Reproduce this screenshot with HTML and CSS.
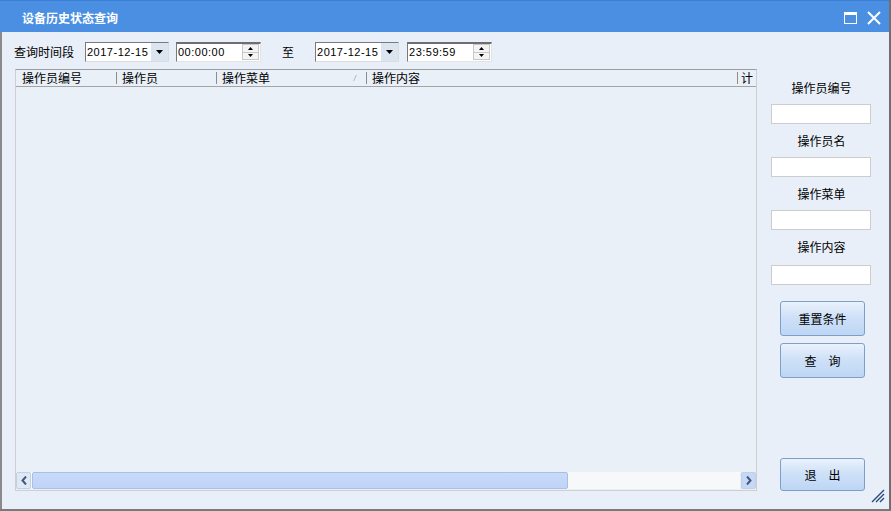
FILE: index.html
```html
<!DOCTYPE html>
<html lang="zh">
<head>
<meta charset="utf-8">
<title>设备历史状态查询</title>
<link rel="stylesheet" href="styles.css">
</head>
<body>
<div class="window">
  <div class="titlebar">
    <span class="title">设备历史状态查询</span>
    <div class="tb-btns">
      <svg class="tb-max" width="13" height="12" viewBox="0 0 13 12"><rect x="0.5" y="0.5" width="12" height="11" fill="none" stroke="#fff"/><rect x="0" y="0" width="13" height="3" fill="#fff"/></svg>
      <svg class="tb-close" width="14" height="14" viewBox="0 0 14 14"><path d="M1 1 L13 13 M13 1 L1 13" stroke="#fff" stroke-width="2"/></svg>
    </div>
  </div>
  <div class="content">
    <div class="left">
      <div class="toolbar">
        <span class="lbl">查询时间段</span>
        <div class="combo"><span class="val">2017-12-15</span><span class="drop"><svg width="7" height="4" viewBox="0 0 7 4"><path d="M0 0 H7 L3.5 4 Z" fill="#000"/></svg></span></div>
        <div class="timebox"><span class="val">00:00:00</span><span class="spin"><span class="sp"><svg width="5" height="3" viewBox="0 0 5 3"><path d="M2.5 0 L5 3 H0 Z" fill="#000"/></svg></span><span class="sp"><svg width="5" height="3" viewBox="0 0 5 3"><path d="M0 0 H5 L2.5 3 Z" fill="#000"/></svg></span></span></div>
        <span class="to">至</span>
        <div class="combo"><span class="val">2017-12-15</span><span class="drop"><svg width="7" height="4" viewBox="0 0 7 4"><path d="M0 0 H7 L3.5 4 Z" fill="#000"/></svg></span></div>
        <div class="timebox"><span class="val">23:59:59</span><span class="spin"><span class="sp"><svg width="5" height="3" viewBox="0 0 5 3"><path d="M2.5 0 L5 3 H0 Z" fill="#000"/></svg></span><span class="sp"><svg width="5" height="3" viewBox="0 0 5 3"><path d="M0 0 H5 L2.5 3 Z" fill="#000"/></svg></span></span></div>
      </div>
      <div class="list">
        <div class="header">
          <div class="col c1"><span class="ht">操作员编号</span><span class="sep"></span></div>
          <div class="col c2"><span class="ht">操作员</span><span class="sep"></span></div>
          <div class="col c3"><span class="ht">操作菜单</span><svg class="sort" width="4" height="6" viewBox="0 0 4 6"><path d="M3.5 0 L0.5 6" stroke="#b8b8b8" stroke-width="1"/></svg><span class="sep"></span></div>
          <div class="col c4"><span class="ht">操作内容</span><span class="sep"></span></div>
          <div class="col c5"><span class="ht">计</span></div>
        </div>
        <div class="rows"></div>
        <div class="hscroll">
          <span class="sbtn left-btn"><svg width="6" height="9" viewBox="0 0 6 9"><path d="M5 0.5 L1.5 4.5 L5 8.5" fill="none" stroke="#44587a" stroke-width="2"/></svg></span>
          <span class="track"><span class="thumb"></span></span>
          <span class="sbtn right-btn"><svg width="6" height="9" viewBox="0 0 6 9"><path d="M1 0.5 L4.5 4.5 L1 8.5" fill="none" stroke="#44587a" stroke-width="2"/></svg></span>
        </div>
      </div>
    </div>
    <div class="right">
      <span class="flbl">操作员编号</span>
      <div class="field"></div>
      <span class="flbl">操作员名</span>
      <div class="field"></div>
      <span class="flbl">操作菜单</span>
      <div class="field"></div>
      <span class="flbl">操作内容</span>
      <div class="field f4"></div>
      <button class="btn b1">重置条件</button>
      <button class="btn b2">查　询</button>
      <button class="btn exit">退　出</button>
    </div>
  </div>
  <svg class="grip" width="15" height="15" viewBox="0 0 15 15"><path d="M14 2 L2 14 M14 6 L6 14 M14 10 L10 14" stroke="#2a4a7a" stroke-width="1.4"/></svg>
</div>
</body>
</html>
```

FILE: styles.css
```css
* { box-sizing: border-box; }
html, body { margin: 0; padding: 0; }
body {
  width: 891px;
  height: 511px;
  overflow: hidden;
  background: #e8eff8;
  font-family: "Noto Sans CJK SC", "Liberation Sans", sans-serif;
  font-size: 12px;
  color: #000;
}
.window {
  position: relative;
  width: 891px;
  height: 511px;
  display: flex;
  flex-direction: column;
  border-right: 2px solid #6f6f6f;
  border-bottom: 2px solid #7a7a7a;
  background: #e8eff8;
}
.titlebar {
  height: 32px;
  flex: none;
  display: flex;
  align-items: center;
  background: #4a8fe1;
  border-top: 1px solid #3b7fd6;
  padding-left: 22px;
  color: #fff;
}
.title {
  font-weight: bold;
  font-size: 12px;
  line-height: 16px;
  margin-top: 2px;
}
.tb-btns {
  margin-left: auto;
  display: flex;
  align-items: center;
  gap: 10px;
  margin-right: 8px;
  margin-top: 2px;
}
.content {
  flex: 1;
  display: flex;
  border-left: 2px solid #8a8a8a;
  min-height: 0;
}
.left {
  width: 755px;
  display: flex;
  flex-direction: column;
}
.toolbar {
  margin-top: 10px;
  height: 20px;
  display: flex;
  align-items: center;
  padding-left: 12px;
}
.lbl { line-height: 16px; width: 61px; margin-right: 10px; }
.to { line-height: 16px; margin-left: 21px; margin-right: 21px; }
.val {
  font-family: "Liberation Sans", Arial, sans-serif;
  font-size: 11px;
  letter-spacing: 0.5px;
  line-height: 18px;
  padding-left: 1px;
}
.combo {
  width: 84px;
  height: 20px;
  display: flex;
  background: #fff;
  border: 1px solid;
  border-color: #7a7a7a #dcdcdc #dcdcdc #7a7a7a;
}
.combo .val { flex: 1; }
.combo .drop {
  width: 17px;
  background: #dbe5f1;
  display: flex;
  align-items: center;
  justify-content: center;
}
.timebox {
  margin-left: 7px;
  width: 85px;
  height: 20px;
  display: flex;
  background: #fff;
  border: 1px solid;
  border-top: 2px solid #6f6f6f;
  border-color: #6f6f6f #e4e4e4 #e4e4e4 #7a7a7a;
}
.to + .combo + .timebox { margin-left: 8px; }
.timebox .val { flex: 1; line-height: 16px; }
.spin {
  width: 17px;
  display: flex;
  flex-direction: column;
  margin: 0 1px 1px 0;
}
.sp {
  flex: 1;
  display: flex;
  align-items: center;
  justify-content: center;
  background: #f4f4f4;
  border: 1px solid #c8c8c8;
}
.sp + .sp { border-top: none; }
.list {
  margin-top: 7px;
  margin-left: 13px;
  width: 742px;
  height: 422px;
  display: flex;
  flex-direction: column;
  border: 1px solid #cfcfcf;
  border-top: 1px solid #9c9c9c;
  background: #e9f0f8;
}
.header {
  height: 17px;
  flex: none;
  display: flex;
  border-bottom: 1px solid #a4a4a4;
  overflow: hidden;
}
.col {
  display: flex;
  align-items: center;
  flex: none;
  padding-left: 6px;
  white-space: nowrap;
  overflow: hidden;
}
.ht { line-height: 16px; }
.c1 { width: 101px; }
.c2 { width: 100px; padding-left: 5px; }
.c3 { width: 150px; padding-left: 5px; }
.c4 { width: 371px; padding-left: 5px; }
.c5 { flex: 1; padding-left: 3px; }
.sep {
  width: 1px;
  height: 12px;
  background: #8c8c8c;
  margin-left: auto;
}
.sort { margin-left: auto; margin-right: 9px; }
.sort + .sep { margin-left: 0; }
.rows { flex: 1; }
.hscroll {
  height: 17px;
  flex: none;
  display: flex;
  margin-bottom: 1px;
}
.sbtn {
  width: 15px;
  display: flex;
  align-items: center;
  justify-content: center;
  border: 1px solid #c4d0e2;
  border-radius: 2px;
}
.left-btn { background: #dfe8f5; }
.right-btn { background: #c6d8f7; margin-left: 1px; }
.track {
  flex: 1;
  display: flex;
  background: #f7f8fa;
  padding-left: 1px;
}
.thumb {
  width: 536px;
  background: linear-gradient(#c9daf9, #c0d3f8);
  border: 1px solid #a9bfe8;
  border-radius: 2px;
}
.right {
  flex: 1;
  display: flex;
  flex-direction: column;
  align-items: center;
  padding: 48px 3px 18px 0;
}
.flbl { line-height: 16px; margin-bottom: 8px; }
.field {
  width: 100px;
  height: 20px;
  background: #fff;
  border: 1px solid #cdcdcd;
  margin-bottom: 9px;
  margin-right: 2px;
}
.f4 { margin-top: 2px; }
.btn {
  width: 85px;
  height: 35px;
  font-family: "Noto Sans CJK SC", sans-serif;
  font-size: 12px;
  color: #000;
  border: 1px solid #7f9fcb;
  border-radius: 3px;
  background: linear-gradient(#eaf2fc 0%, #cfe1f8 45%, #bdd6f5 100%);
  padding: 0;
  margin-left: 2px;
}
.b1 { margin-top: 7px; }
.b2 { margin-top: 7px; }
.exit { margin-top: auto; height: 33px; }
.grip {
  position: absolute;
  right: 4px;
  bottom: 6px;
}
```
